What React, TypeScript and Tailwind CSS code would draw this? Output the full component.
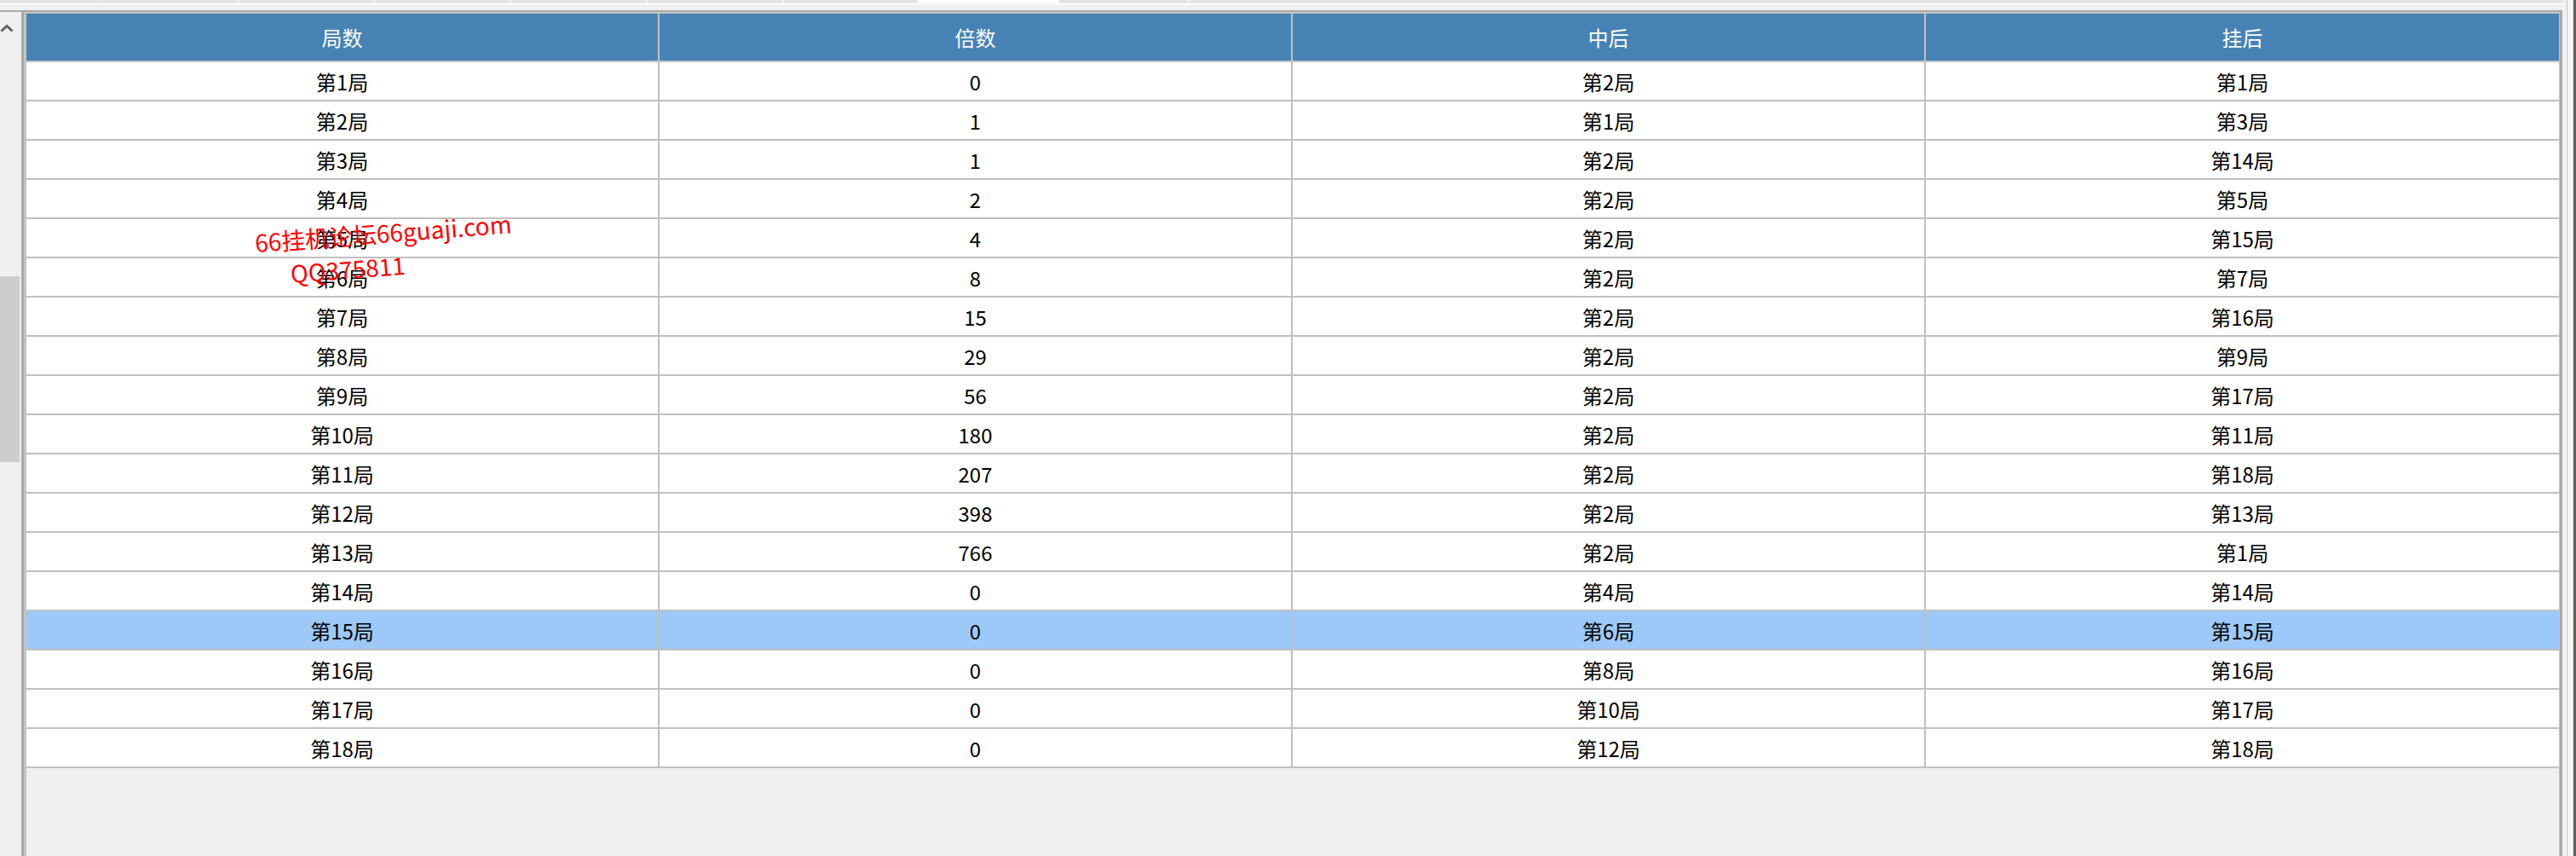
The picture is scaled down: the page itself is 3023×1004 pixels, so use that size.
const font = '"Noto Sans CJK SC", "Noto Sans", sans-serif'

const headers = ['局数', '倍数', '中后', '挂后']

const rows: [string, string, string, string][] = [
  ['第1局', '0', '第2局', '第1局'],
  ['第2局', '1', '第1局', '第3局'],
  ['第3局', '1', '第2局', '第14局'],
  ['第4局', '2', '第2局', '第5局'],
  ['第5局', '4', '第2局', '第15局'],
  ['第6局', '8', '第2局', '第7局'],
  ['第7局', '15', '第2局', '第16局'],
  ['第8局', '29', '第2局', '第9局'],
  ['第9局', '56', '第2局', '第17局'],
  ['第10局', '180', '第2局', '第11局'],
  ['第11局', '207', '第2局', '第18局'],
  ['第12局', '398', '第2局', '第13局'],
  ['第13局', '766', '第2局', '第1局'],
  ['第14局', '0', '第4局', '第14局'],
  ['第15局', '0', '第6局', '第15局'],
  ['第16局', '0', '第8局', '第16局'],
  ['第17局', '0', '第10局', '第17局'],
  ['第18局', '0', '第12局', '第18局'],
]

const selectedRow = 14

// widths of the tab strip cells along the top edge
const tabs = [120, 160, 160, 160, 160, 160, 158]

function TopStrip() {
  return (
    <div className="flex flex-col">
      <div className="flex h-[3px]">
        {tabs.map((w, i) => (
          <div
            key={i}
            style={{ width: w }}
            className="h-[3px] bg-[#e4e4e4] border-b border-r-2 border-b-[#d6d6d6] border-r-[#f6f6f6]"
          />
        ))}
        <div className="w-[165px] h-[6px] bg-white" />
        <div className="w-[153px] h-[3px] bg-[#e4e4e4] border-b border-r-2 border-b-[#d6d6d6] border-r-[#f6f6f6]" />
        <div className="flex-1 h-[3px] bg-[#e4e4e4] border-b border-b-[#d6d6d6]" />
      </div>
      <div className="h-[3px] bg-[#f8f8f8]" />
    </div>
  )
}

function ScrollColumn() {
  return (
    <div className="w-[25px] flex flex-col bg-[#f0f0f0] pt-[14px]">
      <svg width="16" height="10" viewBox="0 0 16 10">
        <path d="M1.5 8.5 L8 2.5 L14.5 8.5" fill="none" stroke="#606060" strokeWidth="3" />
      </svg>
      <div className="mt-[286px] w-[23px] h-[218px] bg-[#cdcdcd]" />
    </div>
  )
}

function Grid() {
  return (
    <div className="grid grid-cols-4">
      {headers.map((h, i) => (
        <div
          key={h}
          className={
            'h-[57px] flex items-center justify-center bg-[#4682b4] text-white border-b-2 border-[#c0c0c0] ' +
            (i < 3 ? 'border-r-2' : '')
          }
        >
          {h}
        </div>
      ))}
      {rows.map((r, ri) =>
        r.map((c, ci) => (
          <div
            key={ri + '-' + ci}
            className={
              'h-[46px] flex items-center justify-center pt-[2px] text-black border-b-2 border-[#c0c0c0] ' +
              (ci < 3 ? 'border-r-2 ' : '') +
              (ri === selectedRow ? 'bg-[#9dc9f9]' : 'bg-white')
            }
          >
            {c}
          </div>
        ))
      )}
    </div>
  )
}

export default function App() {
  return (
    <div
      className="relative w-[3023px] h-[1004px] flex bg-[#f0f0f0] overflow-hidden text-[24px]"
      style={{ fontFamily: font }}
    >
      <div className="w-[3007px] flex flex-col">
        <TopStrip />
        <div className="h-[6px]" />
        <div className="h-[2px] bg-[#a9a9a9]" />
        <div className="flex-1 flex">
          <ScrollColumn />
          <div className="flex-1 flex border-l-[3px] border-r-[3px] border-[#a9a9a9]">
            <div className="flex-1 flex flex-col border-t-2 border-l-[3px] border-r border-[#c4c4c4]">
              <Grid />
            </div>
          </div>
        </div>
      </div>

      {/* right window edge */}
      <div className="w-[5px] bg-[#f0f0f0]" />
      <div className="w-[2px] bg-[#dadada]" />
      <div className="w-[5px] bg-[#f8f8f8]" />
      <div className="w-[1px] bg-[#e2e2e2]" />
      <div className="w-[3px] bg-[#5f5f5f]" />

      {/* watermark */}
      <div className="absolute left-[300px] top-[265px] text-[28px] leading-[39px] text-[#ff0000] whitespace-nowrap rotate-[-4.3deg] origin-[0_32px]">
        <div>66挂机论坛66guaji.com</div>
        <div className="ml-[39px]">QQ375811</div>
      </div>
    </div>
  )
}
